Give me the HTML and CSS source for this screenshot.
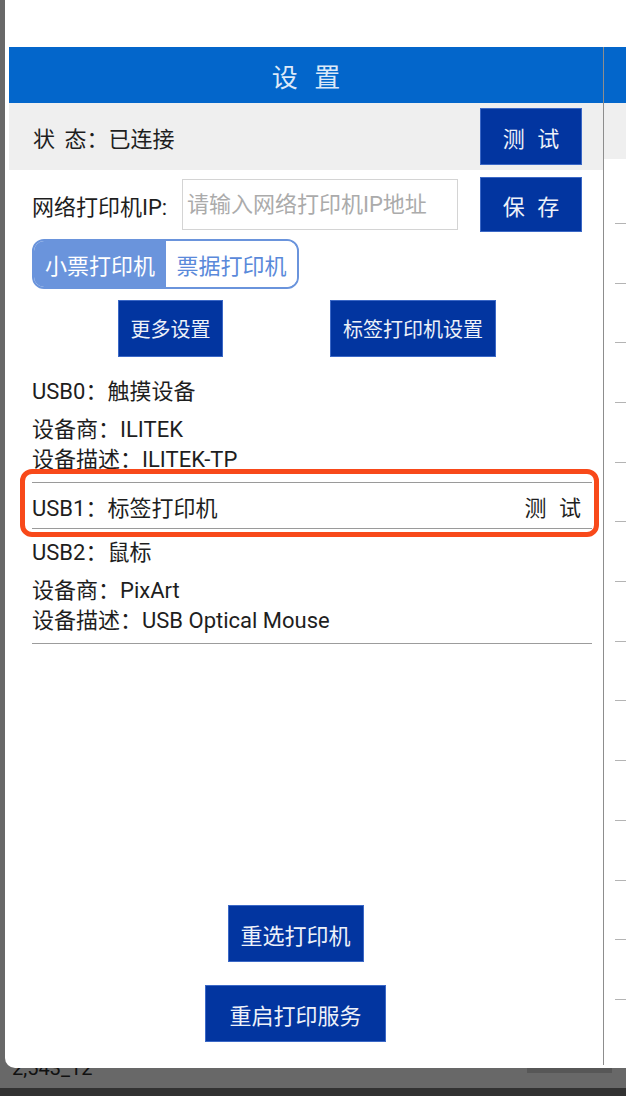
FILE: index.html
```html
<!DOCTYPE html>
<html lang="zh-CN">
<head>
<meta charset="utf-8">
<title>设置</title>
<link rel="stylesheet" href="styles.css">
</head>
<body>
<div class="screen">
  <div class="dialog">
    <div class="panel">
      <div class="main">
        <div class="title">设 置</div>
        <div class="status-row">
          <span class="status-text">状 态：已连接</span>
          <button class="btn btn-test">测 试</button>
        </div>
        <div class="ip-row">
          <span class="ip-label">网络打印机IP:</span>
          <input class="ip-input" type="text" placeholder="请输入网络打印机IP地址">
          <button class="btn btn-save">保 存</button>
        </div>
        <div class="toggle">
          <span class="seg seg-on">小票打印机</span>
          <span class="seg seg-off">票据打印机</span>
        </div>
        <div class="actions">
          <button class="btn btn-small btn-more">更多设置</button>
          <button class="btn btn-small btn-label">标签打印机设置</button>
        </div>
        <div class="devices">
          <div class="device">
            <div class="dev-title">USB0：触摸设备</div>
            <div class="dev-info">设备商：ILITEK</div>
            <div class="dev-info">设备描述：ILITEK-TP</div>
          </div>
          <div class="highlight">
            <div class="dev-row">
              <span>USB1：标签打印机</span>
              <span class="row-test">测 试</span>
            </div>
          </div>
          <div class="device device-last">
            <div class="dev-title">USB2：鼠标</div>
            <div class="dev-info">设备商：PixArt</div>
            <div class="dev-info">设备描述：USB Optical Mouse</div>
          </div>
        </div>
        <div class="footer">
          <button class="btn btn-reselect">重选打印机</button>
          <button class="btn btn-restart">重启打印服务</button>
        </div>
      </div>
      <div class="side">
        <div class="side-head"></div>
        <div class="side-status"></div>
        <div class="side-rows">
          <div class="side-row"></div><div class="side-row"></div><div class="side-row"></div>
          <div class="side-row"></div><div class="side-row"></div><div class="side-row"></div>
          <div class="side-row"></div><div class="side-row"></div><div class="side-row"></div>
          <div class="side-row"></div><div class="side-row"></div><div class="side-row"></div>
          <div class="side-row"></div><div class="side-row"></div>
        </div>
      </div>
    </div>
  </div>
  <div class="taskbar">
    <span class="task-text">2,543_12</span>
    <span class="task-block"></span>
  </div>
  <div class="navbar"></div>
</div>
</body>
</html>
```
FILE: styles.css
```css
* { box-sizing: border-box; }
html, body { margin: 0; padding: 0; }
body {
  background: #686868;
  font-family: Roboto, "Noto Sans CJK SC", sans-serif;
  color: #1e1e1e;
  width: 626px;
  height: 1096px;
  overflow: hidden;
}
.screen { width: 626px; height: 1096px; overflow: hidden; }

.dialog {
  position: relative;
  z-index: 1;
  margin-left: 5px;
  width: 621px;
  height: 1068px;
  background: #fff;
  border-bottom-left-radius: 10px;
  padding: 47px 0 0 4px;
}
.panel { display: flex; height: 1018px; }

.main {
  width: 595px;
  flex: none;
  border-right: 1px solid #8d8d8d;
  display: flex;
  flex-direction: column;
}
.title {
  height: 56px;
  background: #0366cb;
  color: #dde9f8;
  font-size: 26px;
  word-spacing: 10px;
  display: flex;
  align-items: center;
  justify-content: center;
}
.status-row {
  height: 67px;
  background: #efefef;
  display: flex;
  align-items: center;
  justify-content: space-between;
  padding: 0 21px 0 24px;
  font-size: 22px;
}
.status-text { word-spacing: 4px; }

.btn {
  font-family: Roboto, "Noto Sans CJK SC", sans-serif;
  background: #0235a0;
  border: 1px solid #3b68c6;
  color: #edf1f9;
  font-size: 22px;
  padding: 0;
  margin: 0;
  display: flex;
  align-items: center;
  justify-content: center;
}
.btn-test, .btn-save { width: 102px; height: 57px; word-spacing: 7px; }
.btn-save { height: 55px; margin-left: auto; }

.ip-row {
  margin-top: 7px;
  height: 55px;
  display: flex;
  align-items: center;
  padding: 0 21px 0 23px;
  font-size: 22px;
}
.ip-label { width: 150px; flex: none; }
.ip-input {
  width: 276px;
  height: 51px;
  border: 1px solid #d4d4d4;
  font-family: Roboto, "Noto Sans CJK SC", sans-serif;
  font-size: 22px;
  padding: 0 0 0 4px;
  margin: 0;
  outline: none;
}
.ip-input::placeholder { color: #ababab; }

.toggle {
  margin: 7px 0 0 23px;
  width: 267px;
  height: 50px;
  border: 2px solid #6a94dc;
  border-radius: 12px;
  overflow: hidden;
  display: flex;
  font-size: 22px;
}
.seg { display: flex; align-items: center; justify-content: center; }
.seg-on { width: 132px; background: #6a94dc; color: #fff; }
.seg-off { flex: 1; background: #fff; color: #5a89da; }

.actions {
  margin-top: 11px;
  height: 57px;
  display: flex;
  gap: 107px;
  padding-left: 109px;
}
.btn-small { font-size: 20px; height: 57px; }
.btn-more { width: 105px; }
.btn-label { width: 166px; }

.devices {
  margin-top: 22px;
  padding: 0 11px 0 23px;
  font-size: 22px;
}
.dev-title { line-height: 26px; margin-bottom: 10px; }
.dev-info { line-height: 30px; }
.device-last { margin-top: 3px; padding-bottom: 7px; border-bottom: 1px solid #9c9c9c; }

.highlight {
  position: relative;
  margin: -6px -7px 0 -12px;
  border: 5px solid #f8491a;
  border-radius: 12px;
  background: #fff;
  padding: 8px 2px 3px 7px;
}
.dev-row {
  height: 47px;
  border-top: 1px solid #9a9a9a;
  border-bottom: 1px solid #9a9a9a;
  display: flex;
  align-items: center;
  justify-content: space-between;
  padding-right: 11px;
}
.row-test { word-spacing: 7px; }

.footer {
  margin-top: auto;
  display: flex;
  flex-direction: column;
  align-items: center;
  gap: 23px;
  padding: 0 21px 23px 0;
}
.btn-reselect { width: 136px; height: 57px; }
.btn-restart { width: 181px; height: 57px; }

.side { width: 22px; flex: none; }
.side-head { height: 56px; background: #0366cb; }
.side-status { height: 56px; background: #efefef; }
.side-rows { padding-top: 5.3px; }
.side-row {
  height: 59.7px;
  margin-left: 11px;
  border-bottom: 1px solid #b4b4b4;
}

.taskbar {
  position: relative;
  z-index: 0;
  margin-top: -10px;
  height: 30px;
  display: flex;
  align-items: flex-start;
  background: #686868;
}
.task-text {
  margin-left: 12px;
  font-size: 20px;
  line-height: 20px;
  color: #111;
}
.task-block {
  margin: 0 14px 0 auto;
  width: 85px;
  height: 15px;
  background: #575757;
}
.navbar { height: 8px; background: #323232; }
```
